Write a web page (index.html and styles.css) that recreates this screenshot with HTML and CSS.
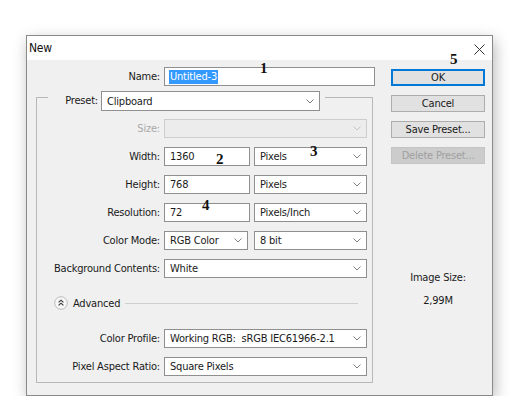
FILE: index.html
```html
<!DOCTYPE html>
<html>
<head>
<meta charset="utf-8">
<title>New</title>
<link rel="stylesheet" href="styles.css">
</head>
<body>
<div class="dialog">
  <div class="titlebar">
    <span class="title">New</span>
    <svg class="close" width="11" height="11" viewBox="0 0 11 11"><path d="M0.5 0.5L10.5 10.5M10.5 0.5L0.5 10.5" stroke="#333" stroke-width="1" fill="none"/></svg>
  </div>
  <div class="content">
    <div class="left">
      <div class="row name-row">
        <span class="lbl">Name:</span>
        <div class="field name-field"><span class="hl">Untitled-3</span></div>
      </div>
      <div class="group">
        <div class="group-head">
          <span class="seg seg-l"></span>
          <span class="lbl preset-lbl">Preset:</span>
          <div class="field select preset"><span>Clipboard</span><svg class="chev" width="8" height="5" viewBox="0 0 8 5"><path d="M0.5 0.5L4 4L7.5 0.5" stroke="#808080" fill="none"/></svg></div>
          <span class="seg seg-r"></span>
        </div>
        <div class="row r-size">
          <span class="lbl dis">Size:</span>
          <div class="field select full disabled"><span></span><svg class="chev" width="8" height="5" viewBox="0 0 8 5"><path d="M0.5 0.5L4 4L7.5 0.5" stroke="#c4c4c4" fill="none"/></svg></div>
        </div>
        <div class="row">
          <span class="lbl">Width:</span>
          <div class="field num">1360</div>
          <div class="field select unit"><span>Pixels</span><svg class="chev" width="8" height="5" viewBox="0 0 8 5"><path d="M0.5 0.5L4 4L7.5 0.5" stroke="#808080" fill="none"/></svg></div>
        </div>
        <div class="row">
          <span class="lbl">Height:</span>
          <div class="field num">768</div>
          <div class="field select unit"><span>Pixels</span><svg class="chev" width="8" height="5" viewBox="0 0 8 5"><path d="M0.5 0.5L4 4L7.5 0.5" stroke="#808080" fill="none"/></svg></div>
        </div>
        <div class="row">
          <span class="lbl">Resolution:</span>
          <div class="field num">72</div>
          <div class="field select unit"><span>Pixels/Inch</span><svg class="chev" width="8" height="5" viewBox="0 0 8 5"><path d="M0.5 0.5L4 4L7.5 0.5" stroke="#808080" fill="none"/></svg></div>
        </div>
        <div class="row">
          <span class="lbl">Color Mode:</span>
          <div class="field select mode"><span>RGB Color</span><svg class="chev" width="8" height="5" viewBox="0 0 8 5"><path d="M0.5 0.5L4 4L7.5 0.5" stroke="#808080" fill="none"/></svg></div>
          <div class="field select bits"><span>8 bit</span><svg class="chev" width="8" height="5" viewBox="0 0 8 5"><path d="M0.5 0.5L4 4L7.5 0.5" stroke="#808080" fill="none"/></svg></div>
        </div>
        <div class="row">
          <span class="lbl">Background Contents:</span>
          <div class="field select full"><span>White</span><svg class="chev" width="8" height="5" viewBox="0 0 8 5"><path d="M0.5 0.5L4 4L7.5 0.5" stroke="#808080" fill="none"/></svg></div>
        </div>
        <div class="adv">
          <svg class="adv-btn" width="14" height="14" viewBox="0 0 14 14"><circle cx="7" cy="7" r="6.3" fill="#f7f7f7" stroke="#b4b4b4" stroke-width="0.9"/><path d="M4.6 6.4L7 4.2L9.4 6.4M4.6 9.4L7 7.2L9.4 9.4" stroke="#333" stroke-width="1.1" fill="none"/></svg>
          <span class="adv-text">Advanced</span>
          <span class="adv-line"></span>
        </div>
        <div class="row r-profile">
          <span class="lbl">Color Profile:</span>
          <div class="field select full"><span>Working RGB:&nbsp; sRGB IEC61966-2.1</span><svg class="chev" width="8" height="5" viewBox="0 0 8 5"><path d="M0.5 0.5L4 4L7.5 0.5" stroke="#808080" fill="none"/></svg></div>
        </div>
        <div class="row">
          <span class="lbl">Pixel Aspect Ratio:</span>
          <div class="field select full"><span>Square Pixels</span><svg class="chev" width="8" height="5" viewBox="0 0 8 5"><path d="M0.5 0.5L4 4L7.5 0.5" stroke="#808080" fill="none"/></svg></div>
        </div>
      </div>
    </div>
    <div class="right">
      <div class="btn primary">OK</div>
      <div class="btn">Cancel</div>
      <div class="btn">Save Preset...</div>
      <div class="btn off">Delete Preset...</div>
      <div class="imgsize">
        <div>Image Size:</div>
        <div class="imgsize-val">2,99M</div>
      </div>
    </div>
  </div>
  <span class="note n1">1</span>
  <span class="note n2">2</span>
  <span class="note n3">3</span>
  <span class="note n4">4</span>
  <span class="note n5">5</span>
</div>
</body>
</html>
```
FILE: styles.css
```css
html, body {
  margin: 0;
  padding: 0;
  background: #ffffff;
}
body {
  font-family: "DejaVu Sans Condensed", "DejaVu Sans", sans-serif;
  font-size: 11px;
  letter-spacing: -0.2px;
  color: #1a1a1a;
  padding: 35px 0 0 26px;
}
.dialog {
  position: relative;
  width: 465px;
  height: 359px;
  border: 1px solid #8a8a8a;
  background: #f0f0f0;
  box-shadow: 2px 5px 14px rgba(0, 0, 0, 0.28);
  display: flex;
  flex-direction: column;
}
.titlebar {
  height: 24px;
  background: #ffffff;
  display: flex;
  align-items: center;
  justify-content: space-between;
  padding: 0 7px 0 2px;
}
.title {
  font-size: 12px;
  color: #111;
}
.close {
  margin-top: 2px;
}
.content {
  display: flex;
  flex: 1;
}
.left {
  padding-left: 9px;
  display: flex;
  flex-direction: column;
}
.row {
  display: flex;
  align-items: center;
  height: 19px;
  margin-top: 9px;
}
.lbl {
  width: 123px;
  text-align: right;
  margin-right: 4px;
  white-space: nowrap;
  flex: none;
}
.name-row {
  margin-top: 7px;
}
.name-row .lbl {
  width: 124px;
}
.field {
  box-sizing: border-box;
  height: 19px;
  background: #ffffff;
  border: 1px solid #8f8f8f;
  display: flex;
  align-items: center;
  padding: 0 5px;
  white-space: nowrap;
  flex: none;
}
.name-field {
  width: 211px;
  padding-left: 4px;
}
.hl {
  background: #3399ff;
  color: #ffffff;
  padding: 0 1px;
  line-height: 14px;
}
.select {
  justify-content: space-between;
  padding-right: 5px;
}
.chev {
  flex: none;
}
.group {
  margin-top: 11px;
  width: 337px;
  box-sizing: border-box;
  border: 1px solid #b8b8b8;
  border-top: none;
  display: flex;
  flex-direction: column;
  padding-bottom: 6px;
}
.group-head {
  display: flex;
  align-items: flex-start;
  height: 20px;
  margin-top: -6px;
}
.seg {
  height: 0;
  border-top: 1px solid #b8b8b8;
  margin-top: 6px;
}
.seg-l {
  width: 11px;
  flex: none;
}
.seg-r {
  flex: 1;
  margin-left: 5px;
}
.preset-lbl {
  width: 50px;
  margin-right: 3px;
  line-height: 20px;
}
.preset {
  width: 219px;
  height: 20px;
}
.r-size {
  margin-top: 8px;
}
.full {
  width: 203px;
}
.disabled {
  background: #ececec;
  border-color: #cdcdcd;
}
.dis {
  color: #a8a8a8;
}
.num {
  width: 86px;
  margin-right: 4px;
}
.unit {
  width: 113px;
}
.mode {
  width: 84px;
  margin-right: 6px;
}
.bits {
  width: 113px;
}
.adv {
  display: flex;
  align-items: center;
  height: 14px;
  margin-top: 18px;
  padding-left: 17px;
}
.adv-text {
  margin-left: 5px;
}
.adv-line {
  flex: none;
  width: 233px;
  margin-left: 5px;
  border-top: 1px solid #cfcfcf;
}
.r-profile {
  margin-top: 19px;
}
.right {
  margin-left: 16px;
  width: 94px;
  display: flex;
  flex-direction: column;
}
.btn {
  box-sizing: border-box;
  height: 17px;
  margin-top: 9px;
  background: #e1e1e1;
  border: 1px solid #adadad;
  display: flex;
  align-items: center;
  justify-content: center;
  white-space: nowrap;
}
.btn.primary {
  margin-top: 9px;
  border: 2px solid #0078d7;
}
.btn.off {
  background: #cccccc;
  border-color: #c4c4c4;
  color: #a0a0a0;
}
.imgsize {
  margin-top: 106px;
  text-align: center;
  line-height: 15px;
}
.imgsize-val {
  margin-top: 8px;
}
.note {
  position: absolute;
  font-family: "Liberation Serif", serif;
  font-weight: bold;
  font-size: 15px;
  line-height: 15px;
  letter-spacing: 0;
  color: #111;
}
.n1 { left: 233px; top: 25px; }
.n2 { left: 189px; top: 116px; }
.n3 { left: 283px; top: 108px; }
.n4 { left: 175px; top: 162px; }
.n5 { left: 423px; top: 16px; }
```
